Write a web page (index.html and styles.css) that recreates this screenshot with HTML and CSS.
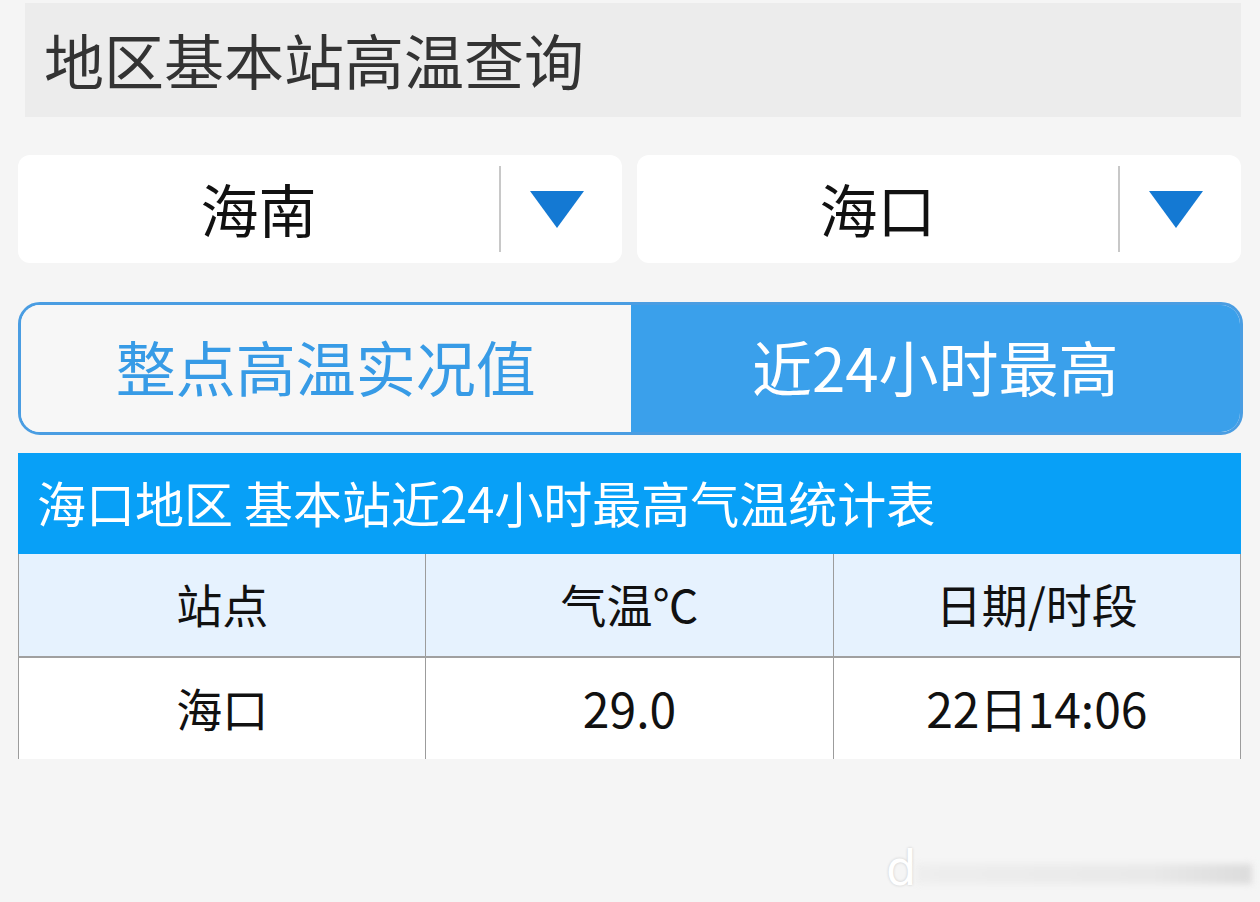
FILE: index.html
```html
<!DOCTYPE html>
<html lang="zh-CN">
<head>
    <meta charset="UTF-8">
    <meta name="viewport" content="width=device-width, initial-scale=1.0">
    <title>地区基本站高温查询</title>
    <link rel="stylesheet" href="styles.css">
</head>
<body>
    <div class="page">
        <div class="header">地区基本站高温查询</div>

        <div class="selects">
            <div class="select">
                <span class="select-value">海南</span>
                <span class="select-arrow">
                    <svg width="54" height="37" viewBox="0 0 54 37"><polygon points="0,0 54,0 27,37" fill="#1479d3"/></svg>
                </span>
            </div>
            <div class="select">
                <span class="select-value">海口</span>
                <span class="select-arrow">
                    <svg width="54" height="37" viewBox="0 0 54 37"><polygon points="0,0 54,0 27,37" fill="#1479d3"/></svg>
                </span>
            </div>
        </div>

        <div class="tabs">
            <div class="tab">整点高温实况值</div>
            <div class="tab tab-active">近24小时最高</div>
        </div>

        <div class="result">
            <div class="result-title">海口地区 基本站近24小时最高气温统计表</div>
            <table class="result-table">
                <tr class="head-row">
                    <td>站点</td>
                    <td>气温℃</td>
                    <td>日期/时段</td>
                </tr>
                <tr>
                    <td>海口</td>
                    <td class="num">29.0</td>
                    <td class="num">22日14:06</td>
                </tr>
            </table>
        </div>
    </div>

    <div class="watermark">
        <span class="wm-d">d</span>
        <span class="wm-bar"></span>
    </div>
</body>
</html>
```

FILE: styles.css
```css
html{
    box-sizing: border-box;
    font-family: "Noto Sans CJK SC", "Noto Sans", sans-serif;
}
*,*::before,*::after{
    box-sizing: inherit;
    padding: 0;
    margin: 0;
}
body{
    background-color: #f5f5f5;
    width: 1260px;
    height: 902px;
    overflow: hidden;
    position: relative;
}
.page{
    padding: 3px 19px 0 18px;
}
.header{
    margin-left: 7px;
    height: 114px;
    background-color: #ececec;
    color: #333;
    font-size: 60px;
    display: flex;
    align-items: center;
    padding-left: 19px;
    padding-bottom: 4px;
}
.selects{
    margin-top: 38px;
    display: grid;
    grid-template-columns: 1fr 1fr;
    gap: 15px;
}
.select{
    height: 108px;
    background-color: #fff;
    border-radius: 12px;
    display: flex;
    align-items: center;
}
.select-value{
    flex: 1;
    text-align: center;
    font-size: 58px;
    color: #111;
    padding-bottom: 2px;
}
.select-arrow{
    width: 123px;
    height: 86px;
    border-left: 2px solid #c8c8c8;
    display: flex;
    align-items: center;
    justify-content: center;
    padding-right: 10px;
}
.tabs{
    margin-top: 39px;
    height: 133px;
    display: grid;
    grid-template-columns: 1fr 1fr;
    border: 3px solid #4a9de2;
    border-radius: 22px;
    overflow: hidden;
    margin-right: -2px;
}
.tab{
    display: flex;
    align-items: center;
    justify-content: center;
    font-size: 60px;
    color: #379be6;
    background-color: #f7f7f7;
    padding-bottom: 6px;
}
.tab-active{
    background-color: #3aa0eb;
    color: #fff;
}
.result{
    margin-top: 18px;
}
.result-title{
    height: 101px;
    background-color: #08a0f7;
    color: #fff;
    font-size: 49px;
    display: flex;
    align-items: center;
    padding-left: 19px;
    padding-bottom: 4px;
}
.result-table{
    width: 100%;
    border-collapse: collapse;
    table-layout: fixed;
    background-color: #fff;
}
.result-table td{
    height: 102px;
    text-align: center;
    font-size: 46px;
    color: #111;
    border-left: 1px solid #9c9c9c;
    border-right: 1px solid #9c9c9c;
    padding-bottom: 4px;
}
.result-table td.num{
    font-size: 48px;
}
.head-row td{
    background-color: #e6f2fe;
    border-bottom: 2px solid #a0a0a0;
    height: 103px;
}
.watermark{
    position: absolute;
    left: 886px;
    top: 846px;
    width: 366px;
    height: 46px;
    display: flex;
    align-items: flex-end;
}
.wm-d{
    font-family: "DejaVu Sans", sans-serif;
    font-size: 48px;
    color: #fff;
    text-shadow: 0 0 3px rgba(0,0,0,0.18);
    line-height: 1;
}
.wm-bar{
    flex: 1;
    height: 20px;
    margin-bottom: 8px;
    background: linear-gradient(90deg, #eeeeee, #e9e9e9 70%, #dcdcdc);
    filter: blur(3px);
}
```
